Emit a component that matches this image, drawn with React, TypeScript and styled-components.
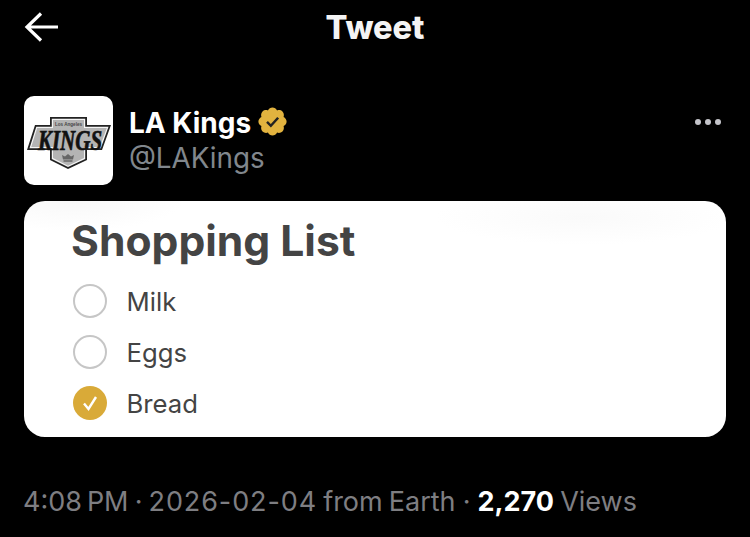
import React from "react";
import styled, { createGlobalStyle } from "styled-components";

const Global = createGlobalStyle`
  html, body { margin: 0; padding: 0; background: #000; }
  body { font-family: "Inter", "Liberation Sans", sans-serif; }
`;

const Page = styled.div`
  width: 750px;
  height: 537px;
  overflow: hidden;
  background: #000;
  padding: 0 24px;
  box-sizing: border-box;
  display: flex;
  flex-direction: column;
`;

const Header = styled.header`
  height: 54px;
  display: grid;
  grid-template-columns: 1fr auto 1fr;
  align-items: center;
`;

const BackIcon = styled.svg`
  width: 36px;
  height: 30px;
  display: block;
`;

const Title = styled.h1`
  margin: 0;
  color: #f4f4f4;
  font-size: 32.500px;
  font-weight: 800;
`;

const Profile = styled.section`
  margin-top: 42px;
  height: 89px;
  display: flex;
  gap: 16px;
`;

const Avatar = styled.div`
  width: 89px;
  height: 89px;
  flex: none;
  border-radius: 10px;
  background: #fff;
  display: flex;
  align-items: center;
  justify-content: center;
`;

const LogoMark = styled.svg`
  display: block;
  margin-top: 5px;
`;

const Identity = styled.div`
  flex: 1;
  display: flex;
  flex-direction: column;
  padding-top: 9px;
`;

const NameRow = styled.div`
  display: flex;
  align-items: center;
  gap: 5px;
  height: 36px;
`;

const Name = styled.span`
  color: #fff;
  font-size: 28px;
  font-weight: 700;
`;

const BadgeIcon = styled.svg`
  display: block;
  flex: none;
  margin-top: -3px;
`;

const Handle = styled.span`
  color: #81878d;
  font-size: 27.800px;
  line-height: 34px;
`;

const More = styled.div`
  display: flex;
  gap: 4px;
  margin-top: 23px;
  margin-right: 5px;
  align-self: flex-start;
`;

const Dot = styled.span`
  width: 6px;
  height: 6px;
  border-radius: 50%;
  background: #c4c4ca;
`;

const Card = styled.section`
  margin-top: 16px;
  height: 236px;
  border-radius: 21px;
  background:
    radial-gradient(ellipse 150px 28px at 560px 16px, #fafafa, transparent),
    radial-gradient(ellipse 110px 30px at 50px 0, #f8f8f8, transparent),
    #fff;
  padding: 15px 47px 0;
  box-sizing: border-box;
`;

const CardTitle = styled.h2`
  margin: 0 0 18px;
  color: #444;
  font-size: 42.600px;
  line-height: 50px;
  font-weight: 700;
`;

const List = styled.ul`
  margin: 0;
  padding: 0 0 0 2px;
  list-style: none;
  display: flex;
  flex-direction: column;
  gap: 17px;
`;

const Item = styled.li`
  display: flex;
  align-items: center;
  gap: 19.500px;
  height: 34px;
  color: #444;
  font-size: 25.700px;
`;

const Check = styled.span<{ $done?: boolean }>`
  width: 34px;
  height: 34px;
  flex: none;
  box-sizing: border-box;
  border-radius: 50%;
  border: ${(p) => (p.$done ? "none" : "2.5px solid #c6c6c6")};
  background: ${(p) => (p.$done ? "#d9aa38" : "transparent")};
  display: flex;
  align-items: center;
  justify-content: center;
`;

const Meta = styled.footer`
  margin: 46px 0 0 -1px;
  color: #7e7e82;
  font-size: 27px;
  line-height: 38px;
  word-spacing: -1.500px;
  white-space: nowrap;
`;

const Sep = styled.span<{ $width: number }>`
  display: inline-block;
  width: ${(p) => p.$width}px;
  text-align: center;
`;

const Stamp = styled.span`
  letter-spacing: 0.900px;
`;

const Count = styled.strong`
  color: #fff;
  font-weight: 700;
`;

const Logo = () => (
  <LogoMark width="86" height="56" viewBox="0 0 86 56">
    <path d="M24 2H61V10H85L76 35H61V45L42 54L24 45V35H1L9 10H24Z" fill="#222" />
    <path d="M25.800 3.800H59.200V11.800H82.500L74.800 33.200H59.200V44L42 52L25.800 44V33.200H3.500L10.300 11.800H25.800Z" fill="#f4f4f4" />
    <path d="M27 5H58V13H80.800L73.800 32H58V43L42 50.800L27 43V32H5.200L11.200 13H27Z" fill="#b4b4b4" />
    <text x="42.500" y="11" textAnchor="middle" fontFamily="Liberation Sans" fontSize="5.500" fontWeight="700" fill="#444" textLength="27" lengthAdjust="spacingAndGlyphs">Los Angeles</text>
    <text transform="translate(44 34.500) scale(1 1.400)" textAnchor="middle" fontFamily="Liberation Serif" fontSize="21" fontWeight="700" fontStyle="italic" fill="#111" stroke="#111" strokeWidth="0.500">KINGS</text>
    <path d="M37 44.500H47L48 40L45 41.500L42 39L39 41.500L36 40Z" fill="#666" />
    <path d="M37.500 46H46.500" stroke="#666" strokeWidth="1.500" />
  </LogoMark>
);

const Badge = () => (
  <BadgeIcon width="33" height="33" viewBox="0 0 24 24">
    <path
      d="M22.250 12c0-1.430-.880-2.670-2.190-3.340.460-1.390.200-2.900-.810-3.910s-2.520-1.270-3.910-.810c-.660-1.310-1.910-2.190-3.340-2.190s-2.670.880-3.330 2.190c-1.400-.460-2.910-.200-3.920.810s-1.260 2.520-.800 3.910c-1.310.670-2.200 1.910-2.200 3.340s.890 2.670 2.200 3.340c-.460 1.390-.210 2.900.800 3.910s2.520 1.260 3.910.810c.670 1.310 1.910 2.190 3.340 2.190s2.680-.880 3.340-2.190c1.390.450 2.900.200 3.910-.810s1.270-2.520.810-3.910c1.310-.670 2.190-1.910 2.190-3.340z"
      fill="#e2b33f"
    />
    <path d="M8 12.300l2.800 2.800 5.300-5.800" fill="none" stroke="#222" strokeWidth="1.800" />
  </BadgeIcon>
);

export default function App() {
  return (
    <>
      <Global />
      <Page>
        <Header>
          <BackIcon viewBox="0 0 36 30">
            <path d="M34 15H3M17 1.500L3 15L17 28.500" fill="none" stroke="#fff" strokeWidth="3.200" />
          </BackIcon>
          <Title>Tweet</Title>
        </Header>
        <Profile>
          <Avatar>
            <Logo />
          </Avatar>
          <Identity>
            <NameRow>
              <Name>LA Kings</Name>
              <Badge />
            </NameRow>
            <Handle>@LAKings</Handle>
          </Identity>
          <More>
            <Dot />
            <Dot />
            <Dot />
          </More>
        </Profile>
        <Card>
          <CardTitle>Shopping List</CardTitle>
          <List>
            <Item>
              <Check />
              Milk
            </Item>
            <Item>
              <Check />
              Eggs
            </Item>
            <Item>
              <Check $done>
                <svg width="18" height="18" viewBox="0 0 18 18">
                  <path d="M3 9.500L7.500 15L15 3" fill="none" stroke="#fff" strokeWidth="2.400" />
                </svg>
              </Check>
              Bread
            </Item>
          </List>
        </Card>
        <Meta>
          4:08{"\u2009"}PM<Sep $width={20}>·</Sep><Stamp>2026-02-04</Stamp> from Earth<Sep $width={22}>·</Sep><Count>2,270</Count> Views
        </Meta>
      </Page>
    </>
  );
}
